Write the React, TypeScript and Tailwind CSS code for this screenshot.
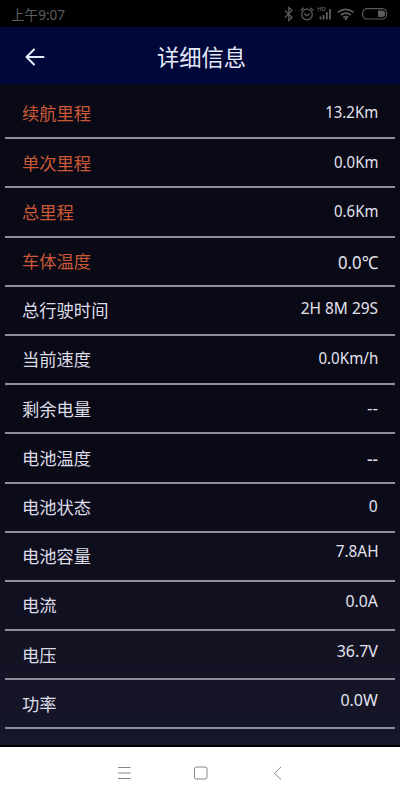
import type { ReactNode } from 'react';

interface DetailRow {
  label: string;
  value: string;
  highlight?: boolean;
  valueClass?: string;
}

const rows: DetailRow[] = [
  { label: '续航里程', value: '13.2Km', highlight: true, valueClass: 'pb-1 scale-x-[0.88]' },
  { label: '单次里程', value: '0.0Km', highlight: true, valueClass: 'pb-0.5 scale-x-[0.88]' },
  { label: '总里程', value: '0.6Km', highlight: true, valueClass: 'pb-0.5 scale-x-[0.88]' },
  { label: '车体温度', value: '0.0℃', highlight: true, valueClass: 'pt-0.5 scale-x-[0.93] text-[18px]' },
  { label: '总行驶时间', value: '2H 8M 29S', valueClass: 'pb-1.5 scale-x-[0.91]' },
  { label: '当前速度', value: '0.0Km/h', valueClass: 'pb-1 scale-x-[0.89]' },
  { label: '剩余电量', value: '--', valueClass: 'pb-0.5 scale-x-100' },
  { label: '电池温度', value: '--', valueClass: 'pt-0.5 scale-x-100 font-medium' },
  { label: '电池状态', value: '0', valueClass: 'pb-1 scale-x-[0.92]' },
  { label: '电池容量', value: '7.8AH', valueClass: 'pb-3 scale-x-[0.9]' },
  { label: '电流', value: '0.0A', valueClass: 'pb-2.5 scale-x-[0.93]' },
  { label: '电压', value: '36.7V', valueClass: 'pb-2 scale-x-[0.94]' },
  { label: '功率', value: '0.0W', valueClass: 'pb-2 scale-x-[0.94]' },
];

function StatusBar() {
  return (
    <div className="flex h-[27px] items-center justify-between bg-black px-[11px] text-[#5d5d60]">
      <span className="origin-left scale-x-[0.97] pt-0.5 text-[14px] leading-none">上午9:07</span>
      <svg width="106" height="20" viewBox="0 0 106 20" fill="none" stroke="currentColor" strokeWidth="1.2">
        {/* Bluetooth */}
        <path d="M2 6.5l7 7-3.2 3v-13l3.2 3-7 7" />
        {/* Alarm */}
        <circle cx="24" cy="10.5" r="5.3" />
        <path d="M21.2 9.5l2.8 2.2 2.8-2.2M17.5 6.5l3.2-2.8M30.5 6.5l-3.2-2.8" />
        {/* Signal */}
        <text x="34" y="7" fontSize="6" fontWeight="600" fill="currentColor" stroke="none">
          HD
        </text>
        <path d="M37.5 15.5v-3M40.5 15.5V11M43.8 15.5V8M47 15.5V5" strokeWidth="1.8" />
        {/* Wifi */}
        <path
          d="M55 8.2c5-3.8 10.5-3.8 15.5 0M57.8 11c3.2-2.5 6.8-2.5 10 0M60.2 13.6c1.7-1.3 3.5-1.3 5.2 0"
          strokeWidth="1.7"
        />
        <circle cx="62.8" cy="15" r="1.2" fill="currentColor" stroke="none" />
        {/* Battery */}
        <rect x="79.6" y="4.6" width="24" height="10.4" rx="4.6" />
        <path d="M95 6.5h3.8a3.3 3.3 0 0 1 0 6.6H95z" fill="currentColor" stroke="none" />
      </svg>
    </div>
  );
}

function Header() {
  return (
    <header className="grid h-[57px] grid-cols-[80px_1fr_80px] items-center bg-[#00083a] text-[#e6eafa]">
      <svg
        className="ml-[25px] mt-[3px]"
        width="20"
        height="18"
        viewBox="0 0 20 18"
        fill="none"
        stroke="currentColor"
        strokeWidth="2"
        strokeLinecap="round"
        strokeLinejoin="round">
        <path d="M18.5 9H2M9 1.5L1.5 9 9 16.5" />
      </svg>
      <h1 className="pl-[3px] pt-[5px] text-center text-[22.3px] leading-none">详细信息</h1>
    </header>
  );
}

function Row({ label, value, highlight, valueClass = '' }: DetailRow) {
  return (
    <li className="flex h-[49.2px] items-center justify-between border-b-2 border-[#8f8e9d] px-[17px] text-[17px] leading-none">
      <span className={`pt-px text-[17.3px] ${highlight ? 'text-[#cb5936]' : 'text-[#dddde8]'}`}>{label}</span>
      <span className={`origin-right text-[#e3e3ee] ${valueClass}`}>{value}</span>
    </li>
  );
}

function NavButton({ children }: { children: ReactNode }) {
  return (
    <button className="flex h-10 w-[76.5px] items-center justify-center">
      <svg width="16" height="16" viewBox="0 0 16 16" fill="none" stroke="#858585">
        {children}
      </svg>
    </button>
  );
}

export default function App() {
  return (
    <div className="flex h-[800px] w-[400px] flex-col overflow-hidden bg-[#0a0916] font-['Noto_Sans','Noto_Sans_CJK_SC',sans-serif]">
      <StatusBar />
      <Header />
      <main className="flex-1 border-b-2 border-black bg-linear-to-b from-[#0a0916] from-55% to-[#17172a] px-[5px] pt-[6px]">
        <ul>
          {rows.map((row) => (
            <Row key={row.label} {...row} />
          ))}
        </ul>
      </main>
      <nav className="flex h-[53px] items-center justify-center bg-white pb-px pl-px">
        <NavButton>
          <path d="M2 2.5h12.5M2 8h12.5M2 13.5h12.5" />
        </NavButton>
        <NavButton>
          <rect x="1.5" y="2" width="12.5" height="12" rx="2" />
        </NavButton>
        <NavButton>
          <path d="M12 2L5.500 8.200l6.500 6.300" />
        </NavButton>
      </nav>
    </div>
  );
}
